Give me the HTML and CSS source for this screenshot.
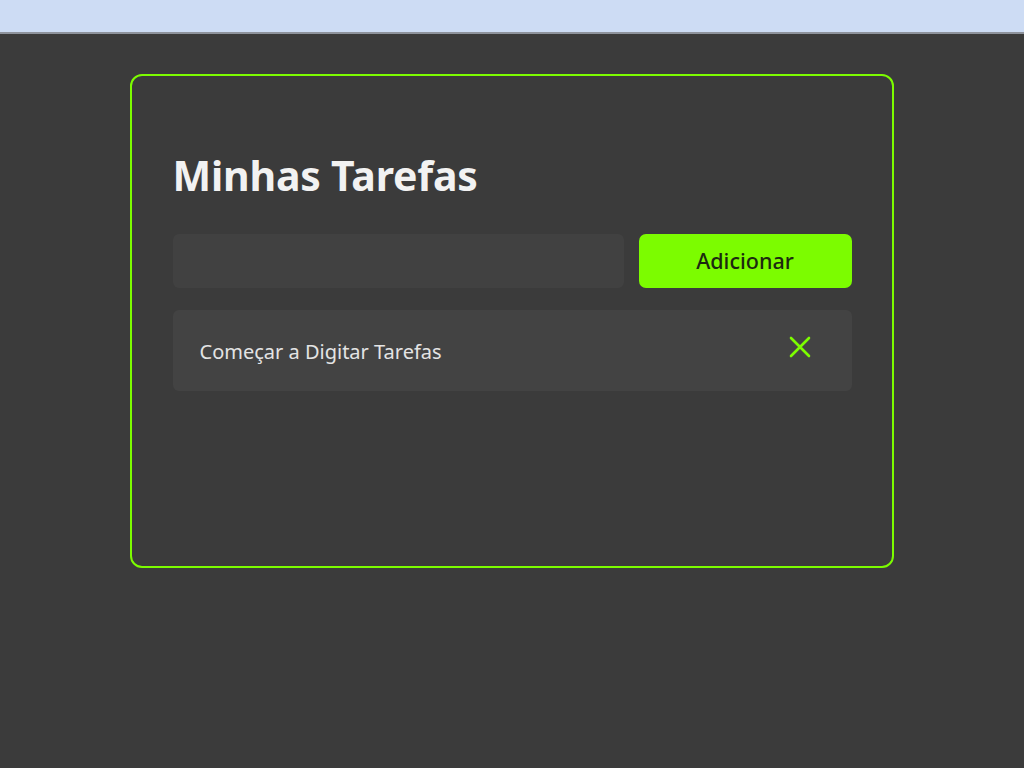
FILE: index.html
```html
<!DOCTYPE html>
<html lang="pt-BR">
<head>
<meta charset="utf-8">
<title>Minhas Tarefas</title>
<link rel="stylesheet" href="styles.css">
</head>
<body>
<div class="topbar"></div>
<main class="page">
  <section class="card">
    <h1 class="title">Minhas Tarefas</h1>
    <form class="add-row">
      <input class="task-input" type="text" aria-label="Nova tarefa">
      <button class="add-btn" type="button">Adicionar</button>
    </form>
    <ul class="task-list">
      <li class="task">
        <span class="task-text">Começar a Digitar Tarefas</span>
        <button class="remove-btn" type="button" aria-label="Remover">
          <svg width="24" height="24" viewBox="0 0 24 24"><path d="M3 3 L21 21 M21 3 L3 21" stroke="#7cfc00" stroke-width="2.6" stroke-linecap="round" fill="none"/></svg>
        </button>
      </li>
    </ul>
  </section>
</main>
</body>
</html>
```

FILE: styles.css
```css
* { box-sizing: border-box; }
html, body { margin: 0; padding: 0; }
body {
  background: #3b3b3b;
  font-family: "Noto Sans", "Open Sans", sans-serif;
  height: 768px;
  overflow: hidden;
}
.topbar {
  height: 34px;
  background: #cddcf4;
  border-bottom: 2px solid #8e939c;
}
.page {
  display: flex;
  justify-content: center;
  padding-top: 40px;
}
.card {
  width: 764px;
  height: 494px;
  border: 2.5px solid #7cfc00;
  border-radius: 12px;
  padding: 75px 40.5px 0;
  background: #3b3b3b;
}
.title {
  margin: 0 0 35px;
  font-size: 41px;
  line-height: 48px;
  font-weight: 700;
  color: #f2f2f2;
  letter-spacing: -0.2px;
}
.add-row {
  display: flex;
  gap: 15px;
  margin: 0 0 22px;
}
.task-input {
  flex: 1;
  height: 54px;
  border: none;
  border-radius: 6px;
  background: #414141;
  outline: none;
}
.add-btn {
  width: 213px;
  height: 54px;
  border: none;
  border-radius: 7px;
  background: #7cfc00;
  color: #1c2a10;
  font-family: "Noto Sans", sans-serif;
  font-size: 21.5px;
  font-weight: 500;
  padding: 0 0 2px;
}
.task-list {
  list-style: none;
  margin: 0;
  padding: 0;
}
.task {
  height: 81px;
  display: flex;
  align-items: center;
  justify-content: space-between;
  background: #434343;
  border-radius: 6px;
  padding: 0 40px 0 27px;
}
.task-text {
  color: #e4e4e4;
  font-size: 20px;
  margin-top: 1px;
}
.remove-btn {
  border: none;
  background: none;
  padding: 0;
  display: flex;
  margin-top: -8px;
}
```
